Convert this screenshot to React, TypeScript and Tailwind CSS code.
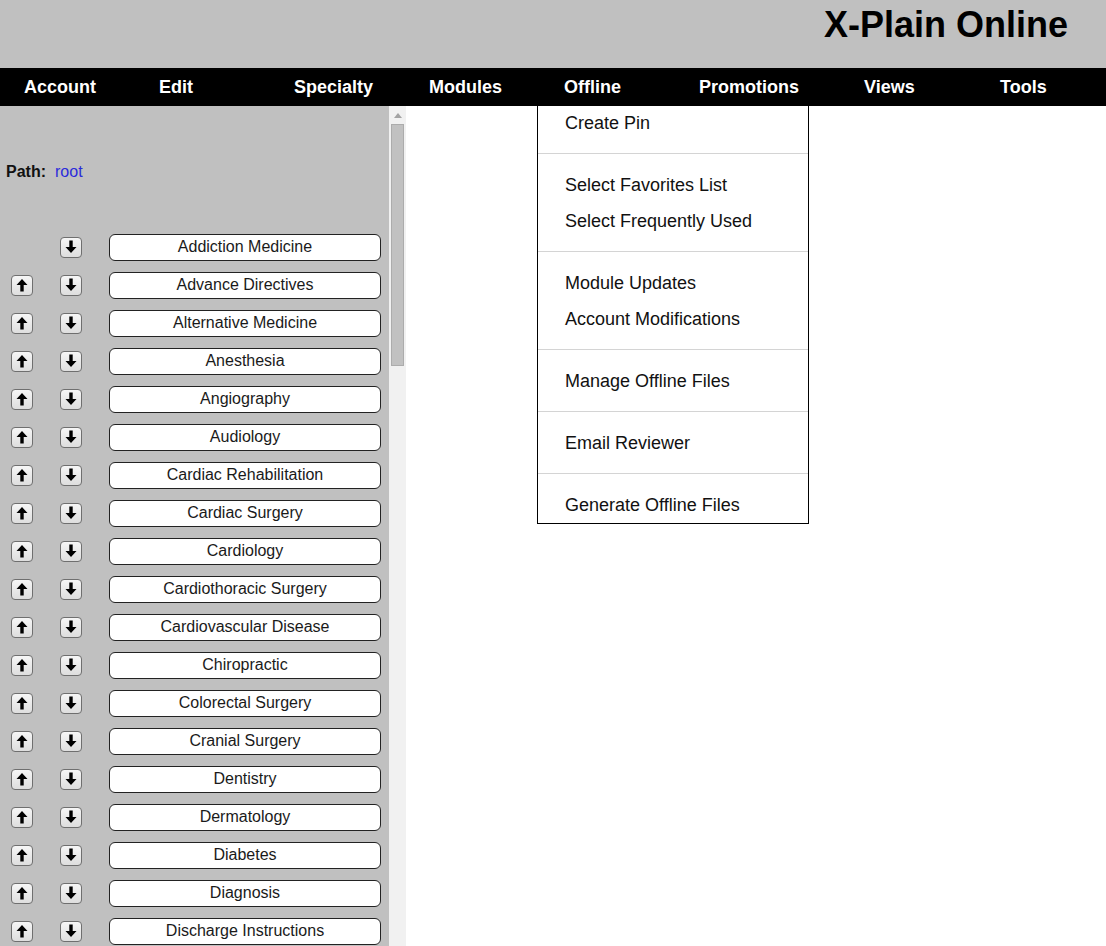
import React from 'react';

const NAV = [
  { label: 'Account', w: 'w-[135px]' },
  { label: 'Edit', w: 'w-[135px]' },
  { label: 'Specialty', w: 'w-[135px]' },
  { label: 'Modules', w: 'w-[135px]' },
  { label: 'Offline', w: 'w-[135px]', open: true },
  { label: 'Promotions', w: 'w-[165px]' },
  { label: 'Views', w: 'w-[136px]' },
  { label: 'Tools', w: 'w-[130px]' },
];

const MENU: string[][] = [
  ['Create Pin'],
  ['Select Favorites List', 'Select Frequently Used'],
  ['Module Updates', 'Account Modifications'],
  ['Manage Offline Files'],
  ['Email Reviewer'],
  ['Generate Offline Files'],
];

const SPECIALTIES = [
  'Addiction Medicine',
  'Advance Directives',
  'Alternative Medicine',
  'Anesthesia',
  'Angiography',
  'Audiology',
  'Cardiac Rehabilitation',
  'Cardiac Surgery',
  'Cardiology',
  'Cardiothoracic Surgery',
  'Cardiovascular Disease',
  'Chiropractic',
  'Colorectal Surgery',
  'Cranial Surgery',
  'Dentistry',
  'Dermatology',
  'Diabetes',
  'Diagnosis',
  'Discharge Instructions',
];

function Arrow({ up }: { up?: boolean }) {
  return (
    <svg width="12" height="14" viewBox="0 0 12 14" className={up ? '' : 'rotate-180'}>
      <path d="M6 1 L11.5 7 L7.7 7 L7.7 13.5 L4.3 13.5 L4.3 7 L0.5 7 Z" fill="#000" />
    </svg>
  );
}

function MoveButton({ up }: { up?: boolean }) {
  return (
    <button
      type="button"
      className="flex h-[21px] w-[22px] items-center justify-center rounded-[4px] border border-[#6f6f6f] bg-gradient-to-b from-[#f6f6f6] to-[#dedede]"
    >
      <Arrow up={up} />
    </button>
  );
}

function OfflineMenu() {
  return (
    <div className="absolute left-[-3px] top-full z-10 -mt-px w-[272px] border border-black bg-white">
      {MENU.map((group, gi) => (
        <div key={gi}>
          {gi > 0 && <div className="mb-[13px] mt-3 h-px bg-[#d4d4d4]" />}
          {group.map((item, ii) => (
            <div
              key={item}
              className={`flex items-center px-[27px] text-[18px] text-[#111] ${gi === 0 && ii === 0 ? 'h-[35px]' : 'h-9'}`}
            >
              {item}
            </div>
          ))}
        </div>
      ))}
    </div>
  );
}

export default function App() {
  return (
    <div className="flex h-[946px] w-[1106px] flex-col overflow-hidden bg-white font-['Liberation_Sans',Arial,sans-serif]">
      <header className="h-[68px] shrink-0 bg-[#c0c0c0] pr-[38px] pt-[7px] text-right">
        <h1 className="text-[36px] font-bold leading-none text-black">X-Plain Online</h1>
      </header>

      <nav className="relative z-10 flex h-[38px] shrink-0 items-center bg-black">
        {NAV.map((n) => (
          <div key={n.label} className={`relative flex h-full items-center pl-6 ${n.w}`}>
            <span className="text-[18px] font-bold text-white">{n.label}</span>
            {n.open && <OfflineMenu />}
          </div>
        ))}
      </nav>

      <div className="flex min-h-0 flex-1">
        <aside className="w-[389px] shrink-0 bg-[#c0c0c0]">
          <div className="box-content flex h-[18px] items-center pl-[6px] pt-[57px] text-[16px]">
            <span className="font-bold text-[#111]">Path:</span>
            <span className="ml-[9px] text-[#2b2bdb]">root</span>
          </div>
          <div className="mt-[47px]">
            {SPECIALTIES.map((name, i) => (
              <div key={name} className="flex h-[38px] items-center">
                <div className="ml-[11px] w-[22px]">{i > 0 && <MoveButton up />}</div>
                <div className="ml-[27px]">
                  <MoveButton />
                </div>
                <button
                  type="button"
                  className="ml-[27px] flex h-[27px] w-[272px] items-center justify-center rounded-[6px] border border-[#222] bg-white text-[16px] text-[#1a1a1a]"
                >
                  {name}
                </button>
              </div>
            ))}
          </div>
        </aside>

        <div className="flex w-[17px] shrink-0 flex-col items-center bg-[#f1f1f1]">
          <div className="flex h-[18px] w-full items-center justify-center">
            <svg width="8" height="5" viewBox="0 0 8 5">
              <path d="M4 0 L8 5 L0 5 Z" fill="#a3a3a3" />
            </svg>
          </div>
          <div className="h-[242px] w-[13px] border border-[#acacac] bg-[#c1c1c1]" />
        </div>

        <main className="flex-1 bg-white" />
      </div>
    </div>
  );
}
